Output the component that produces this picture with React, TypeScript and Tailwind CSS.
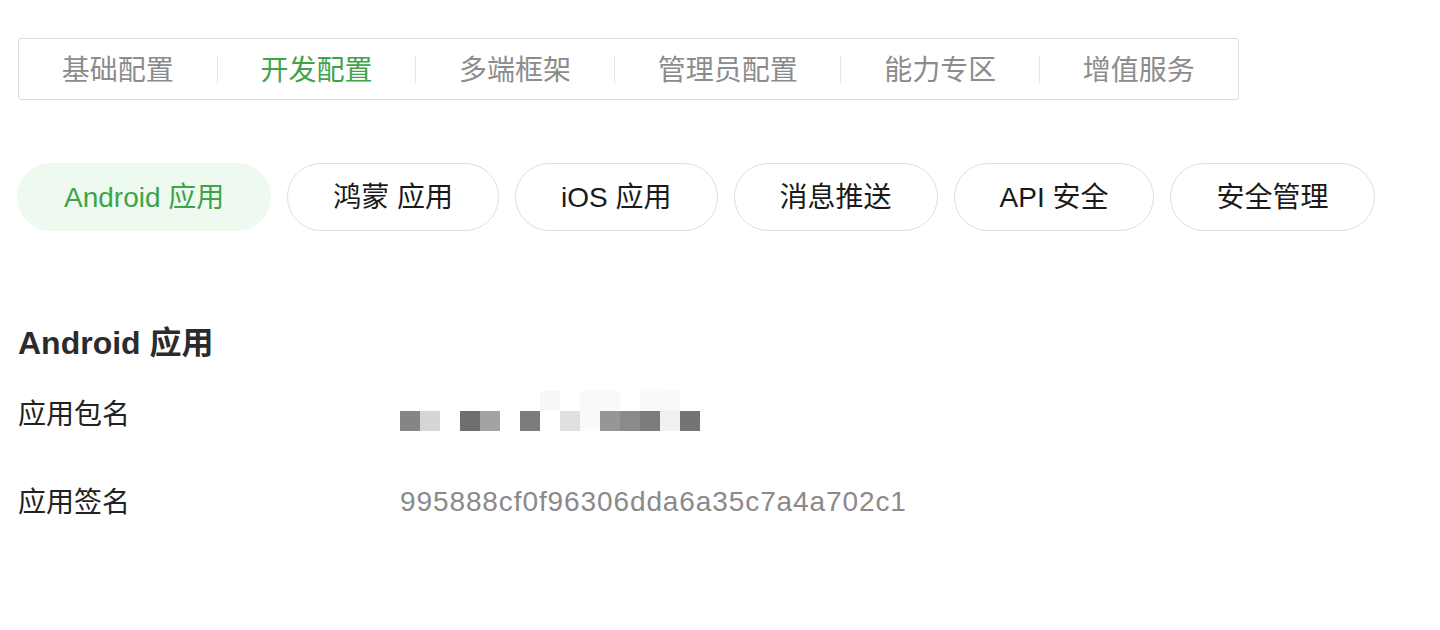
import React from "react";

const tabs = ["基础配置", "开发配置", "多端框架", "管理员配置", "能力专区", "增值服务"];
const pills = ["Android 应用", "鸿蒙 应用", "iOS 应用", "消息推送", "API 安全", "安全管理"];

const mosaic: [number, number, string][] = [
  [140, 0, "#f8f8f8"],
  [180, 0, "#f9f9f9"],
  [200, 0, "#f9f9f9"],
  [240, 0, "#fafafa"],
  [260, 0, "#f9f9f9"],
  [0, 20, "#858585"],
  [20, 20, "#d6d6d6"],
  [60, 20, "#6f6f6f"],
  [80, 20, "#a3a3a3"],
  [120, 20, "#7c7c7c"],
  [160, 20, "#e0e0e0"],
  [180, 20, "#fafafa"],
  [200, 20, "#969696"],
  [220, 20, "#8a8a8a"],
  [240, 20, "#7c7c7c"],
  [260, 20, "#f0f0f0"],
  [280, 20, "#747474"],
];

export default function App() {
  return (
    <div className="min-h-[630px] bg-white pl-[18px] pt-[38px] font-['Liberation_Sans','Noto_Sans_CJK_SC',sans-serif]">
      <div className="inline-flex h-[62px] items-center rounded-[3px] border border-[#dcdcdc]">
        {tabs.map((t, i) => (
          <React.Fragment key={t}>
            {i > 0 && <div className="mt-[2px] h-[28px] w-px bg-[#e6e6e6]" />}
            <div
              className={`px-[42.8px] pt-[4px] text-[28px] leading-[40px] ${
                i === 1 ? "text-[#3fa34a]" : "text-[#8c8c8c]"
              }`}
            >
              {t}
            </div>
          </React.Fragment>
        ))}
      </div>

      <div className="-ml-px mt-[63px] flex gap-[16px]">
        {pills.map((p, i) => (
          <div
            key={p}
            className={`flex h-[68px] items-center rounded-full border pt-[2px] text-[28px] leading-[40px] ${
              i === 0
                ? "border-[#eef9f0] bg-[#eef9f0] px-[46px] text-[#3fa34a]"
                : "border-[#dedede] bg-white px-[45px] text-[#1a1a1a]"
            }`}
          >
            {p}
          </div>
        ))}
      </div>

      <div className="mt-[92px] text-[32px] font-bold leading-[40px] text-[#2b2b2b]">Android 应用</div>

      <div className="mt-[32px] flex items-start">
        <div className="w-[382px] text-[28px] leading-[40px] text-[#222222]">应用包名</div>
        <svg width="300" height="40" viewBox="0 0 300 40" className="-mt-[4px]">
          {mosaic.map(([x, y, c], i) => (
            <rect key={i} x={x} y={y} width="20" height="20" fill={c} />
          ))}
        </svg>
      </div>

      <div className="mt-[48px] flex items-center">
        <div className="w-[382px] text-[28px] leading-[40px] text-[#222222]">应用签名</div>
        <div className="-mt-[2px] text-[28px] leading-[40px] tracking-[0.9px] text-[#8a8a8a]">
          995888cf0f96306dda6a35c7a4a702c1
        </div>
      </div>
    </div>
  );
}
